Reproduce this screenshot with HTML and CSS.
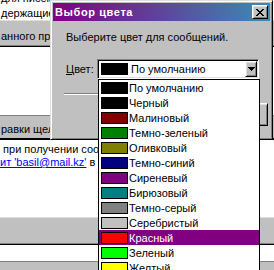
FILE: index.html
```html
<!DOCTYPE html>
<html>
<head>
	<meta charset="utf-8">
	<title>Выбор цвета</title>
	<link rel="stylesheet" href="styles.css">
</head>
<body>
	<!----- window behind the dialog ----->
	<div class="app">
		<div class="page-top">
			<p class="txt prev">для писем, раз</p>
			<p class="txt">держащие</p>
		</div>
		<div class="bar bar-a"><span class="txt">анного пра</span></div>
		<div class="blank blank-a"></div>
		<div class="bar bar-b"><span class="txt">равки щел</span></div>
		<div class="blank blank-b">
			<p class="txt">&nbsp;при получении сооб</p>
			<p class="txt"><a href="#" class="link">ит 'basil@mail.kz'</a> в п</p>
		</div>
		<div class="bar bar-c"></div>
		<div class="blank blank-c"></div>
		<div class="bar bar-d"></div>
	</div>

	<!----- dialog ----->
	<div class="dialog">
		<div class="titlebar">
			<span class="title">Выбор цвета</span>
			<span class="close">
				<svg width="8" height="7" viewBox="0 0 8 7"><path d="M0 0h2v1H0zM6 0h2v1H6zM1 1h2v1H1zM5 1h2v1H5zM2 2h4v1H2zM3 3h2v1H3zM2 4h4v1H2zM1 5h2v1H1zM5 5h2v1H5zM0 6h2v1H0zM6 6h2v1H6z" fill="#000"/></svg>
			</span>
		</div>
		<div class="dlg-body">
			<p class="prompt">Выберите цвет для сообщений.</p>
			<div class="field">
				<label class="lbl"><u>Ц</u>вет:</label>
				<div class="combo">
					<span class="sw" style="background:#000"></span>
					<span class="combo-text">По умолчанию</span>
					<span class="combo-btn">
						<svg width="7" height="4" viewBox="0 0 7 4"><path d="M0 0h7v1H0zM1 1h5v1H1zM2 2h3v1H2zM3 3h1v1H3z" fill="#000"/></svg>
					</span>
				</div>
			</div>
			<div class="groove"></div>
			<div class="btn-row"><span class="btn"></span></div>
		</div>
	</div>

	<!----- opened color list ----->
	<ul class="droplist">
		<li><span class="sw" style="background:#000"></span><span class="name">По умолчанию</span></li>
		<li><span class="sw" style="background:#000"></span><span class="name">Черный</span></li>
		<li><span class="sw" style="background:#800000"></span><span class="name">Малиновый</span></li>
		<li><span class="sw" style="background:#008000"></span><span class="name">Темно-зеленый</span></li>
		<li><span class="sw" style="background:#808000"></span><span class="name">Оливковый</span></li>
		<li><span class="sw" style="background:#000080"></span><span class="name">Темно-синий</span></li>
		<li><span class="sw" style="background:#800080"></span><span class="name">Сиреневый</span></li>
		<li><span class="sw" style="background:#008080"></span><span class="name">Бирюзовый</span></li>
		<li><span class="sw" style="background:#808080"></span><span class="name">Темно-серый</span></li>
		<li><span class="sw" style="background:#c0c0c0"></span><span class="name">Серебристый</span></li>
		<li class="sel"><span class="sw" style="background:#ff0000"></span><span class="name">Красный</span></li>
		<li><span class="sw" style="background:#00ff00"></span><span class="name">Зеленый</span></li>
		<li><span class="sw" style="background:#ffff00"></span><span class="name">Желтый</span></li>
	</ul>
</body>
</html>
```

FILE: styles.css
```css
* {
	box-sizing: border-box;
}
body {
	margin: 0;
	width: 274px;
	height: 270px;
	overflow: hidden;
	position: relative;
	background: #fff;
	font-family: "Liberation Sans", Arial, sans-serif;
	color: #000;
}
p {
	margin: 0;
}

/* background window */
.app {
	display: flex;
	flex-direction: column;
	height: 270px;
	font-size: 11px;
}
.txt {
	line-height: 14px;
	white-space: nowrap;
}
.page-top {
	height: 20px;
	padding-left: 1px;
}
.prev {
	margin-top: -9px;
}
.prev + .txt {
	margin-top: 1px;
}
.bar {
	background: #c0c0c0;
	padding-left: 1px;
}
.bar-a {
	height: 27px;
	padding-top: 8px;
	border-top: 1px solid #dfdfdf;
	border-bottom: 1px solid #000;
	box-shadow: inset 0 -1px #808080;
}
.blank-a {
	height: 68px;
}
.bar-b {
	height: 25px;
	padding-top: 6px;
	border-top: 1px solid #808080;
	border-bottom: 2px solid #000;
}
.blank-b {
	height: 77px;
	padding-top: 3px;
}
.blank-b .txt {
	line-height: 13px;
}
.link {
	color: #0000ff;
	text-decoration: underline;
}
.bar-c {
	height: 28px;
	border-top: 1px solid #dfdfdf;
	border-bottom: 1px solid #000;
	box-shadow: inset 0 -1px #808080;
}
.blank-c {
	height: 17px;
	border-bottom: 1px solid #808080;
}
.bar-d {
	flex: 1;
}

/* dialog */
.dialog {
	position: absolute;
	left: 50px;
	top: 0;
	width: 223px;
	height: 140px;
	padding: 2px;
	background: #c0c0c0;
	border: 1px solid;
	border-color: #dfdfdf #000 #000 #dfdfdf;
	box-shadow: inset 1px 1px #fff, inset -1px -1px #808080;
	font-size: 11px;
}
.titlebar {
	height: 18px;
	display: flex;
	align-items: center;
	justify-content: space-between;
	padding: 0 2px;
	background: linear-gradient(90deg, #800080, #3a8cb4);
}
.title {
	color: #fff;
	font-weight: bold;
	letter-spacing: 0.6px;
	line-height: 18px;
}
.close, .combo-btn, .btn {
	display: flex;
	align-items: center;
	justify-content: center;
	background: #c0c0c0;
	border: 1px solid;
	border-color: #fff #000 #000 #fff;
	box-shadow: inset 1px 1px #dfdfdf, inset -1px -1px #808080;
}
.close {
	width: 16px;
	height: 14px;
}
.dlg-body {
	padding: 10px 0 0 13px;
}
.prompt {
	line-height: 13px;
}
.field {
	display: flex;
	align-items: center;
	margin-top: 15px;
}
.lbl {
	width: 31px;
	line-height: 13px;
}
.combo {
	width: 162px;
	height: 20px;
	display: flex;
	align-items: flex-start;
	padding: 1px;
	background: #fff;
	border: 1px solid;
	border-color: #808080 #fff #fff #808080;
	box-shadow: inset 1px 1px #000, inset -1px -1px #dfdfdf;
}
.sw {
	flex: none;
	width: 27px;
	height: 12px;
	margin: 2px 0 0 2px;
	border: 1px solid #000;
}
.combo-text {
	flex: 1;
	margin-left: 3px;
	line-height: 16px;
}
.combo-btn {
	width: 12px;
	height: 16px;
}
.groove {
	width: 195px;
	height: 2px;
	margin: 14px 0 0 -2px;
	border-top: 1px solid #808080;
	border-bottom: 1px solid #fff;
}
.btn-row {
	display: flex;
	justify-content: flex-end;
	margin-top: 8px;
}
.btn {
	width: 75px;
	height: 23px;
	margin-right: 2px;
}

/* opened list */
.droplist {
	position: absolute;
	left: 98px;
	top: 79px;
	width: 162px;
	margin: 0;
	padding: 0;
	list-style: none;
	background: #fff;
	border: 1px solid #000;
	font-size: 11px;
}
.droplist li {
	display: flex;
	align-items: flex-start;
	height: 15px;
}
.droplist .name {
	margin: 1px 0 0 1px;
	line-height: 15px;
	white-space: nowrap;
}
.droplist .sel {
	background: #800080;
	color: #fff;
}
```
